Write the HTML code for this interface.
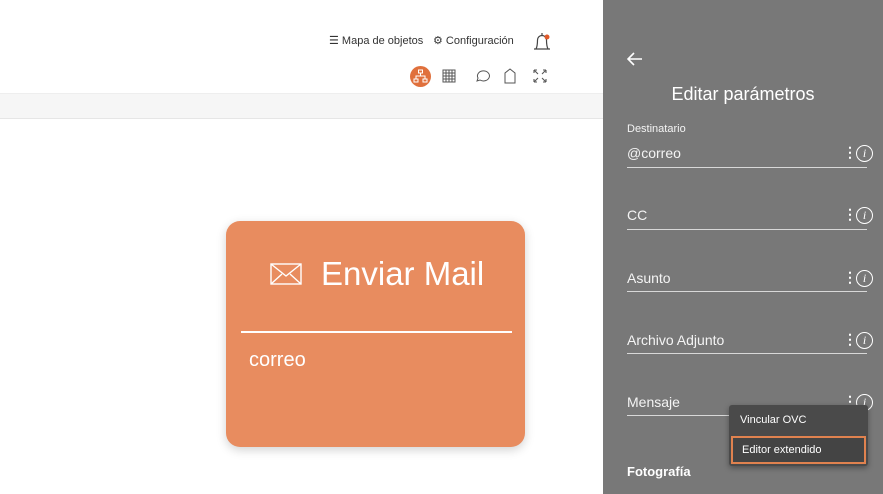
<!DOCTYPE html>
<html><head><meta charset="utf-8"><style>
*{margin:0;padding:0;box-sizing:border-box}
body{width:883px;height:494px;overflow:hidden;font-family:"Liberation Sans",sans-serif;background:#fff;position:relative}
.abs{position:absolute}
.top{font-size:11px;color:#333}
.band{left:0;top:93px;width:603px;height:26px;background:#f6f6f6;border-top:1px solid #eee;border-bottom:1px solid #e6e6e6}
.panel{left:603px;top:0;width:280px;height:494px;background:#787878;color:#fff}
.f{position:absolute;left:24px;width:240px;font-size:14px;color:#f4f4f4}
.line{position:absolute;left:24px;width:240px;height:1px;background:#d8d8d8}
.dots{position:absolute;left:240px;font-weight:bold;font-size:14px}
.info{position:absolute;left:253px;width:17px;height:17px;border:1.3px solid #fff;border-radius:50%;font-family:"Liberation Serif",serif;font-style:italic;font-size:12px;text-align:center;line-height:15px}
.card{left:226px;top:221px;width:299px;height:226px;background:#e88c5f;border-radius:14px;box-shadow:0 3px 10px rgba(0,0,0,.18);color:#fff}
</style></head><body>
<div class="abs top" style="left:329px;top:34px">☰ Mapa de objetos</div>
<div class="abs top" style="left:433px;top:34px">⚙ Configuración</div>
<svg class="abs" style="left:531px;top:31px" width="22" height="22" viewBox="0 0 22 22"><path d="M3 18h16M5 18c1.5-3 1.5-7 1.5-9a4.5 4.5 0 0 1 9 0c0 2 0 6 1.5 9M11 2v2.5" fill="none" stroke="#444" stroke-width="1.2"/><circle cx="16" cy="6" r="2.5" fill="#e0592a"/></svg>
<div class="abs" style="left:410px;top:66px;width:21px;height:21px;border-radius:50%;background:#e0703c"></div>
<svg class="abs" style="left:413px;top:69px" width="15" height="15" viewBox="0 0 15 15" fill="none" stroke="#fff" stroke-width="1"><rect x="5.5" y="1" width="4" height="3"/><rect x="1" y="10" width="4" height="3"/><rect x="10" y="10" width="4" height="3"/><path d="M7.5 4v3M3 10V7h9v3"/></svg>
<svg class="abs" style="left:442px;top:69px" width="14" height="14" viewBox="0 0 14 14" fill="none" stroke="#555" stroke-width="1"><rect x="1" y="1" width="12" height="12"/><path d="M1 4h12M1 7h12M1 10h12M4 1v12M7 1v12M10 1v12"/></svg>
<svg class="abs" style="left:474px;top:68px" width="16" height="16" viewBox="0 0 16 16" fill="none" stroke="#555" stroke-width="1"><path d="M3 13l1-3a6 5 0 1 1 2 2z"/></svg>
<svg class="abs" style="left:504px;top:68px" width="12" height="16" viewBox="0 0 12 16" fill="none" stroke="#555" stroke-width="1"><path d="M1 15V5l5-4 5 4v10z"/></svg>
<svg class="abs" style="left:533px;top:69px" width="14" height="14" viewBox="0 0 14 14" fill="none" stroke="#555" stroke-width="1.1"><path d="M1 1l4 4M1 1h3M1 1v3M13 1l-4 4M13 1h-3M13 1v3M1 13l4-4M1 13h3M1 13v-3M13 13l-4-4M13 13h-3M13 13v-3"/></svg>
<div class="abs band"></div>
<div class="abs card">
<svg class="abs" style="left:44px;top:42px" width="32" height="22" viewBox="0 0 32 22" fill="none" stroke="#fff" stroke-width="1.4"><rect x="1" y="1" width="30" height="20"/><path d="M1 1l15 12L31 1M1 21l11-10M31 21L20 11"/></svg>
<div class="abs" style="left:95px;top:34px;font-size:33px">Enviar Mail</div>
<div class="abs" style="left:15px;top:110px;width:271px;height:2px;background:#fff"></div>
<div class="abs" style="left:23px;top:128px;font-size:20px">correo</div>
</div>
<div class="abs panel">
<svg class="abs" style="left:24px;top:52px" width="16" height="14" viewBox="0 0 16 14" fill="none" stroke="#fff" stroke-width="1.6"><path d="M15 7H2M7 1L1 7l6 6"/></svg>
<div class="abs" style="left:0;width:280px;text-align:center;top:84px;font-size:18px">Editar parámetros</div>
<div class="f" style="top:123px;font-size:11px">Destinatario</div>
<div class="f" style="top:145px">@correo</div><div class="dots" style="top:144px">⋮</div><div class="info" style="top:145px">i</div><div class="line" style="top:167px"></div>
<div class="f" style="top:207px">CC</div><div class="dots" style="top:206px">⋮</div><div class="info" style="top:207px">i</div><div class="line" style="top:229px"></div>
<div class="f" style="top:270px">Asunto</div><div class="dots" style="top:269px">⋮</div><div class="info" style="top:270px">i</div><div class="line" style="top:291px"></div>
<div class="f" style="top:332px">Archivo Adjunto</div><div class="dots" style="top:331px">⋮</div><div class="info" style="top:332px">i</div><div class="line" style="top:353px"></div>
<div class="f" style="top:394px">Mensaje</div><div class="dots" style="top:393px">⋮</div><div class="info" style="top:394px">i</div><div class="line" style="top:415px"></div>
<div class="abs" style="left:24px;top:464px;font-size:13px;font-weight:bold">Fotografía</div>
<div class="abs" style="left:126px;top:405px;width:139px;height:61px;background:#4a4a4a;box-shadow:0 2px 6px rgba(0,0,0,.35);border-radius:3px">
<div class="abs" style="left:11px;top:9px;font-size:11px">Vincular OVC</div>
<div class="abs" style="left:2px;top:31px;width:135px;height:28px;border:2px solid #e0824f;background:#444"><div style="padding:6px 0 0 9px;font-size:11px">Editor extendido</div></div>
</div>
</div>
</body></html>
